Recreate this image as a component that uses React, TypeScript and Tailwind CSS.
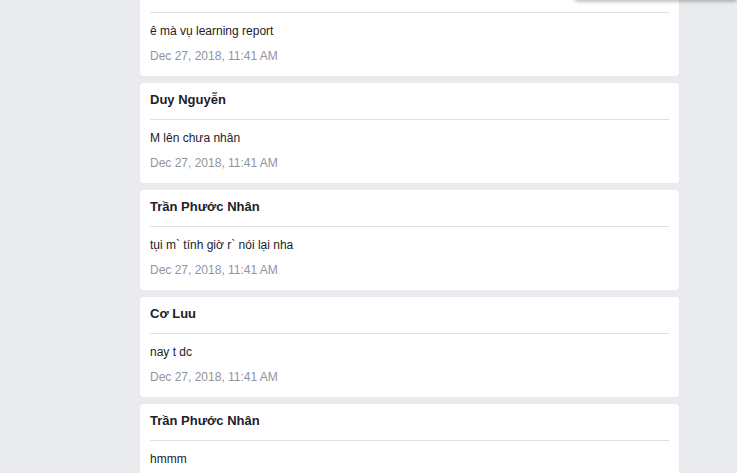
import React from "react";

const posts = [
  { name: "", msg: "ê mà vụ learning report" },
  { name: "Duy Nguyễn", msg: "M lên chưa nhân" },
  { name: "Trần Phước Nhân", msg: "tụi m` tính giờ r` nói lại nha" },
  { name: "Cơ Luu", msg: "nay t dc" },
  { name: "Trần Phước Nhân", msg: "hmmm" },
];

function Card({ name, msg }: { name: string; msg: string }) {
  return (
    <div className="bg-white rounded-[4px] px-[10px] h-[100px] shrink-0">
      <div className="h-[37px] pb-[2px] flex items-center border-b border-[#dddfe2] text-[13px] font-bold text-[#1d2129] leading-[16px]">
        {name}
      </div>
      <div className="pt-[11px] text-[12px] leading-[14px] text-[#1d2129]">{msg}</div>
      <div className="mt-[10px] text-[12px] leading-[16px] text-[#90949c]">
        Dec 27, 2018, 11:41 AM
      </div>
    </div>
  );
}

export default function App() {
  return (
    <div
      className="relative w-[737px] h-[473px] overflow-hidden bg-[#e9ebee]"
      style={{ fontFamily: '"Liberation Sans", Arial, sans-serif' }}
    >
      <div className="ml-[140px] w-[539px] flex flex-col gap-[7px] -mt-[24px]">
        {posts.map((p, i) => (
          <Card key={i} name={p.name} msg={p.msg} />
        ))}
      </div>
      <div className="absolute top-[-12px] left-[575px] right-0 h-[12px] bg-white shadow-[0_1px_4px_rgba(0,0,0,0.35)]" />
    </div>
  );
}
